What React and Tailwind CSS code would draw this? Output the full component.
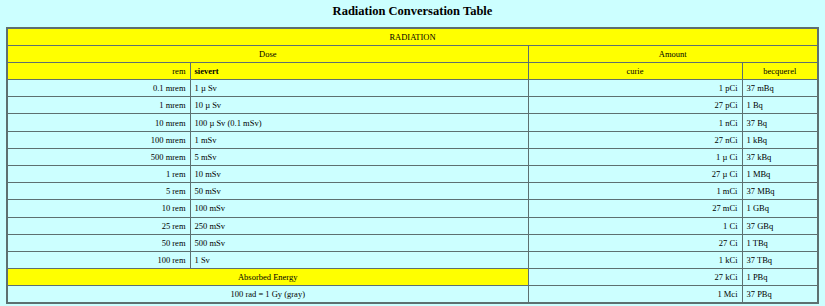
import React from 'react'

const rows = [
  ['0.1 mrem', '1 µ Sv', '1 pCi', '37 mBq'],
  ['1 mrem', '10 µ Sv', '27 pCi', '1 Bq'],
  ['10 mrem', '100 µ Sv (0.1 mSv)', '1 nCi', '37 Bq'],
  ['100 mrem', '1 mSv', '27 nCi', '1 kBq'],
  ['500 mrem', '5 mSv', '1 µ Ci', '37 kBq'],
  ['1 rem', '10 mSv', '27 µ Ci', '1 MBq'],
  ['5 rem', '50 mSv', '1 mCi', '37 MBq'],
  ['10 rem', '100 mSv', '27 mCi', '1 GBq'],
  ['25 rem', '250 mSv', '1 Ci', '37 GBq'],
  ['50 rem', '500 mSv', '27 Ci', '1 TBq'],
  ['100 rem', '1 Sv', '1 kCi', '37 TBq'],
]

const cell = 'border border-[#5d7070] h-[17.2px] py-0 px-[4px] whitespace-nowrap'

const App = () => {
  return (
    <div className="min-h-[306px] bg-[#ccffff] text-black font-['Liberation_Serif',serif] pt-[3px]">
      {/* Title */}
      <h3 className="text-center font-bold text-[12.5px] leading-[16px] h-[24px]">
        Radiation Conversation Table
      </h3>

      <table className="ml-[6px] w-[811px] border-collapse border-2 border-[#5d7070] text-[8.5px] leading-[10px] table-fixed">
        <colgroup>
          <col className="w-[183px]" />
          <col className="w-[338px]" />
          <col className="w-[214px]" />
          <col className="w-[76px]" />
        </colgroup>
        <thead>
          <tr className="bg-[#ffff00]">
            <td colSpan={4} className={`${cell} text-center`}>RADIATION</td>
          </tr>
          <tr className="bg-[#ffff00]">
            <td colSpan={2} className={`${cell} text-center`}>Dose</td>
            <td colSpan={2} className={`${cell} text-center`}>Amount</td>
          </tr>
          <tr className="bg-[#ffff00]">
            <td className={`${cell} text-right`}>rem</td>
            <td className={`${cell} text-left font-bold`}>sievert</td>
            <td className={`${cell} text-center`}>curie</td>
            <td className={`${cell} text-center`}>becquerel</td>
          </tr>
        </thead>
        <tbody>
          {rows.map(r => (
            <tr key={r[0]}>
              <td className={`${cell} text-right`}>{r[0]}</td>
              <td className={`${cell} text-left`}>{r[1]}</td>
              <td className={`${cell} text-right`}>{r[2]}</td>
              <td className={`${cell} text-left`}>{r[3]}</td>
            </tr>
          ))}
          <tr>
            <td colSpan={2} className={`${cell} text-center bg-[#ffff00]`}>Absorbed Energy</td>
            <td className={`${cell} text-right`}>27 kCi</td>
            <td className={`${cell} text-left`}>1 PBq</td>
          </tr>
          <tr>
            <td colSpan={2} className={`${cell} text-center`}>100 rad = 1 Gy (gray)</td>
            <td className={`${cell} text-right`}>1 Mci</td>
            <td className={`${cell} text-left`}>37 PBq</td>
          </tr>
        </tbody>
      </table>
    </div>
  )
}

export default App
